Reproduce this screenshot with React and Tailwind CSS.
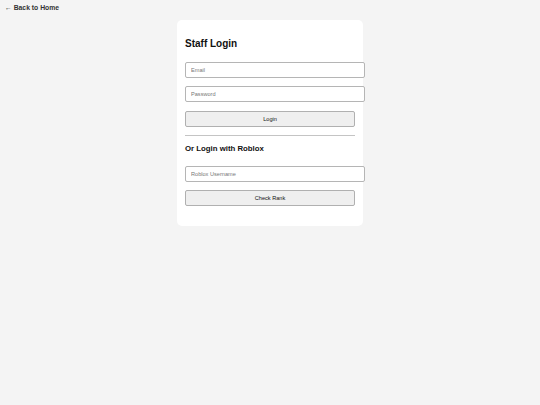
export default function App() {
  return (
    <div className="min-h-[405px] bg-[#f4f4f4] font-['Liberation_Sans',Arial,sans-serif] text-[#111]">
      <div className="px-[5px] pt-[4px] text-[6.8px] leading-[8px]">
        <a href="#" className="font-bold text-[#333] no-underline">
          ← Back to Home
        </a>
      </div>
      <div className="mx-auto mt-[8px] w-[186px] rounded-[5px] bg-white p-[8px] pb-[20px]">
        <h2 className="mt-[10px] mb-[12px] text-[10px] font-bold leading-[12px]">Staff Login</h2>
        <div className="flex flex-col">
          <input
            type="email"
            placeholder="Email"
            className="box-content h-[14px] w-[170px] rounded-[2px] border border-[#b5b5b5] bg-white pl-[5px] pr-[3px] py-0 text-[5.6px] outline-none placeholder:text-[#777]"
          />
          <input
            type="password"
            placeholder="Password"
            className="mt-[8px] box-content h-[14px] w-[170px] rounded-[2px] border border-[#b5b5b5] bg-white pl-[5px] pr-[3px] py-0 text-[5.6px] outline-none placeholder:text-[#777]"
          />
          <button className="mt-[9px] h-[16px] w-[170px] rounded-[2px] border border-[#b0b0b0] bg-[#efefef] text-[5.6px] text-[#111]">
            Login
          </button>
        </div>
        <hr className="mt-[8px] border-t border-[#c4c4c4]" />
        <h3 className="mt-[8px] mb-[12px] text-[7.8px] font-bold leading-[10px]">Or Login with Roblox</h3>
        <div className="flex flex-col">
          <input
            type="text"
            placeholder="Roblox Username"
            className="box-content h-[14px] w-[170px] rounded-[2px] border border-[#b5b5b5] bg-white pl-[5px] pr-[3px] py-0 text-[5.6px] outline-none placeholder:text-[#777]"
          />
          <button className="mt-[8px] h-[16px] w-[170px] rounded-[2px] border border-[#b0b0b0] bg-[#efefef] text-[5.6px] text-[#111]">
            Check Rank
          </button>
        </div>
      </div>
    </div>
  );
}
